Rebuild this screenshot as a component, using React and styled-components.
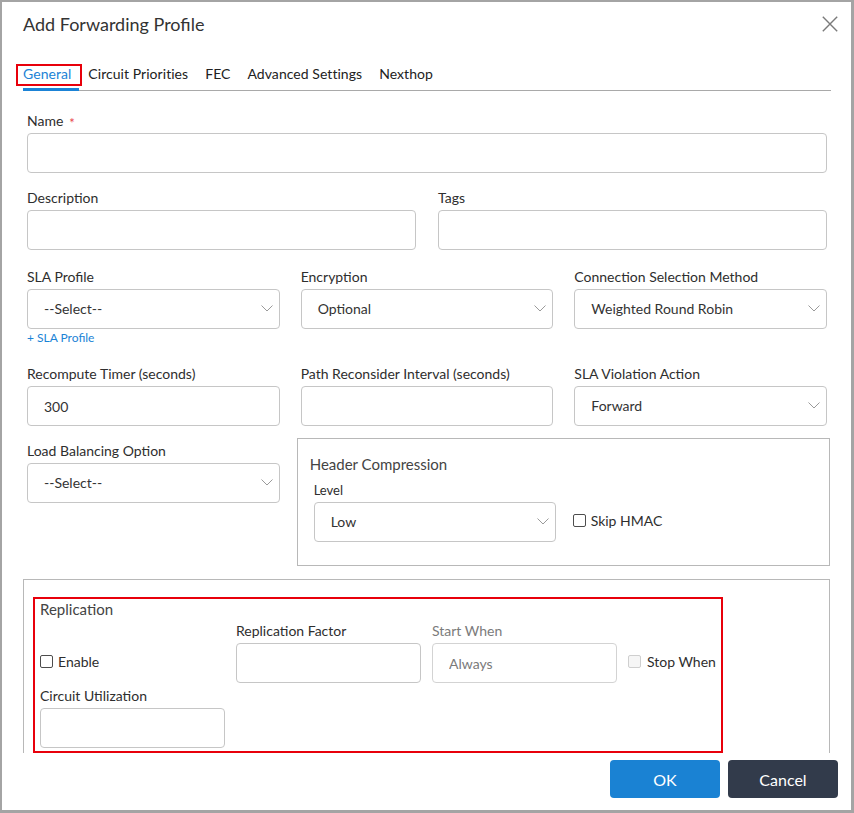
import React from "react";
import styled, { createGlobalStyle } from "styled-components";

const Global = createGlobalStyle`
  html, body { margin: 0; padding: 0; background: #fff; }
  body { font-family: Lato, "Open Sans", "Liberation Sans", Arial, sans-serif; color: #333; }
  *, *::before, *::after { box-sizing: border-box; }
`;

const Dialog = styled.div`
  width: 854px;
  height: 813px;
  border-style: solid;
  border-color: #a4a4a4;
  border-width: 2px 3px 3px 2px;
  display: flex;
  flex-direction: column;
  background: #fff;
`;

const Header = styled.div`
  height: 63px;
  display: flex;
  justify-content: space-between;
  align-items: flex-start;
  padding: 11px 13px 0 21px;
  flex-shrink: 0;
`;

const Title = styled.h1`
  margin: 0;
  font-size: 18px;
  line-height: 22px;
  font-weight: 400;
  color: #333;
`;

const CloseButton = styled.button`
  margin-top: 3px;
  width: 16px;
  height: 16px;
  padding: 0;
  border: 0;
  background: none;
  display: flex;
  cursor: pointer;
`;

const TabList = styled.div`
  display: flex;
  margin: 0 20px 0 21px;
  border-bottom: 1px solid #a9a9a9;
  flex-shrink: 0;
`;

const Tab = styled.div`
  position: relative;
  font-size: 14px;
  line-height: 17px;
  letter-spacing: 0.05px;
  padding: 0 8px 6px 0;
  margin-right: 9px;
  margin-bottom: -1px;
  border-bottom: 3px solid ${(p) => (p.$active ? "#1b83d6" : "transparent")};
  color: ${(p) => (p.$active ? "#1b83d6" : "#222")};
  white-space: nowrap;

  ${(p) =>
    p.$marked &&
    `
    &::after {
      content: "";
      position: absolute;
      left: -7px;
      top: -1px;
      width: 66px;
      height: 22px;
      border: 2px solid #e8000b;
    }
  `}
`;

const Body = styled.div`
  flex: 1;
  min-height: 0;
  overflow: hidden;
  padding: 21px 24px 0 25px;
`;

const Grid = styled.div`
  display: grid;
  grid-template-columns: repeat(${(p) => p.$cols}, minmax(0, 1fr));
  column-gap: ${(p) => p.$gap}px;
  margin-bottom: ${(p) => p.$mb}px;
  align-items: start;
`;

const Field = styled.div`
  display: flex;
  flex-direction: column;
  min-width: 0;
  width: ${(p) => (p.$w ? `${p.$w}px` : "auto")};
  flex-shrink: 0;
`;

const Label = styled.label`
  font-size: 14px;
  line-height: 17px;
  height: 17px;
  margin-bottom: 4px;
  color: ${(p) => (p.$muted ? "#7b7b7b" : "#2e2e2e")};
  white-space: nowrap;
`;

const SmallLabel = styled(Label)`
  font-size: 13px;
  line-height: 16px;
  height: 16px;
  margin-bottom: 4px;
`;

const Required = styled.span`
  display: inline-block;
  color: #e8474c;
  font-size: 13px;
  line-height: 13px;
  margin-left: 6px;
  transform: translateY(2px);
`;

const Input = styled.input`
  height: 40px;
  width: 100%;
  border: 1px solid ${(p) => (p.disabled ? "#d3d3d3" : "#c6c6c6")};
  border-radius: 4px;
  padding: 0 16px;
  font-family: inherit;
  font-size: 14px;
  color: #333;
  background: #fff;
  outline: none;
  &:disabled { color: #7a7a7a; }
`;

const SelectBox = styled.div`
  height: 40px;
  width: ${(p) => (p.$w ? `${p.$w}px` : "100%")};
  border: 1px solid #c6c6c6;
  border-radius: 4px;
  padding: 0 6px 1px 16px;
  display: flex;
  align-items: center;
  justify-content: space-between;
  font-size: 14px;
  color: #333;
  background: #fff;
  cursor: pointer;
`;

const Chevron = () => (
  <svg width="12" height="7" viewBox="0 0 12 7" fill="none">
    <path d="M0.5 0.5 L6 6 L11.5 0.5" stroke="#9a9a9a" strokeWidth="1" />
  </svg>
);

const Select = ({ value, w }) => (
  <SelectBox $w={w} role="combobox">
    <span>{value}</span>
    <Chevron />
  </SelectBox>
);

const AddLink = styled.a`
  margin-top: 1px;
  font-size: 12px;
  line-height: 15px;
  color: #1b83d6;
  text-decoration: none;
  cursor: pointer;
`;

const GroupBox = styled.div`
  border: 1px solid #b8b8b8;
  margin: -4px -3px 0 -4px;
  padding: 16px 12px 23px;
  grid-column: ${(p) => p.$span || "auto"};
`;

const GroupTitle = styled.div`
  font-size: 15px;
  line-height: 18px;
  color: #444;
  margin-bottom: ${(p) => p.$mb ?? 8}px;
`;

const InlineRow = styled.div`
  display: flex;
  align-items: flex-end;
  gap: ${(p) => p.$gap}px;
  padding-left: ${(p) => p.$pl || 0}px;
  margin-top: ${(p) => p.$mt || 0}px;
`;

const CheckRow = styled.label`
  height: 40px;
  padding-bottom: 4px;
  display: flex;
  align-items: center;
  gap: ${(p) => p.$gap || 5}px;
  font-size: 14px;
  color: #2e2e2e;
  white-space: nowrap;
  width: ${(p) => (p.$w ? `${p.$w}px` : "auto")};
  flex-shrink: 0;
`;

const Box = styled.span`
  width: 13px;
  height: 13px;
  border-radius: 2px;
  border: 1px solid ${(p) => (p.$disabled ? "#cfcfcf" : "#4d4d4d")};
  background: ${(p) => (p.$disabled ? "#f6f6f6" : "#fff")};
  flex-shrink: 0;
`;

const ReplicationBox = styled.div`
  border: 1px solid #b8b8b8;
  border-bottom: 0;
  margin: 13px -3px 0 -4px;
  padding: 17px 0 40px 9px;
`;

const Highlight = styled.div`
  width: 690px;
  border: 2px solid #e8000b;
  padding: 1px 0 3px 5px;
`;

const Footer = styled.div`
  flex-shrink: 0;
  display: flex;
  justify-content: flex-end;
  gap: 8px;
  padding: 7px 13px 12px;
`;

const Button = styled.button`
  width: 110px;
  height: 38px;
  border: 0;
  border-radius: 4px;
  font-family: inherit;
  font-size: 16px;
  color: #fff;
  background: ${(p) => (p.$primary ? "#1a82d3" : "#323b4b")};
  cursor: pointer;
`;

const tabs = ["General", "Circuit Priorities", "FEC", "Advanced Settings", "Nexthop"];

export default function App() {
  return (
    <>
      <Global />
      <Dialog>
        <Header>
          <Title>Add Forwarding Profile</Title>
          <CloseButton aria-label="Close">
            <svg width="16" height="16" viewBox="0 0 16 16">
              <path d="M0.8 0.8 L15.2 15.2 M15.2 0.8 L0.8 15.2" stroke="#7a7a7a" strokeWidth="1.4" />
            </svg>
          </CloseButton>
        </Header>

        <TabList>
          {tabs.map((t, i) => (
            <Tab key={t} $active={i === 0} $marked={i === 0}>
              {t}
            </Tab>
          ))}
        </TabList>

        <Body>
          <Grid $cols={1} $gap={0} $mb={16}>
            <Field>
              <Label>
                Name<Required>*</Required>
              </Label>
              <Input />
            </Field>
          </Grid>

          <Grid $cols={2} $gap={22} $mb={18}>
            <Field>
              <Label>Description</Label>
              <Input />
            </Field>
            <Field>
              <Label>Tags</Label>
              <Input />
            </Field>
          </Grid>

          <Grid $cols={3} $gap={21} $mb={20}>
            <Field>
              <Label>SLA Profile</Label>
              <Select value="--Select--" />
              <AddLink>+ SLA Profile</AddLink>
            </Field>
            <Field>
              <Label>Encryption</Label>
              <Select value="Optional" />
            </Field>
            <Field>
              <Label>Connection Selection Method</Label>
              <Select value="Weighted Round Robin" />
            </Field>
          </Grid>

          <Grid $cols={3} $gap={21} $mb={16}>
            <Field>
              <Label>Recompute Timer (seconds)</Label>
              <Input defaultValue="300" />
            </Field>
            <Field>
              <Label>Path Reconsider Interval (seconds)</Label>
              <Input />
            </Field>
            <Field>
              <Label>SLA Violation Action</Label>
              <Select value="Forward" />
            </Field>
          </Grid>

          <Grid $cols={3} $gap={21} $mb={0}>
            <Field>
              <Label>Load Balancing Option</Label>
              <Select value="--Select--" />
            </Field>
            <GroupBox $span="2 / 4">
              <GroupTitle $mb={9}>Header Compression</GroupTitle>
              <InlineRow $gap={17} $pl={4}>
                <Field $w={242}>
                  <SmallLabel>Level</SmallLabel>
                  <Select value="Low" />
                </Field>
                <CheckRow>
                  <Box />
                  Skip HMAC
                </CheckRow>
              </InlineRow>
            </GroupBox>
          </Grid>

          <ReplicationBox>
            <Highlight>
              <GroupTitle $mb={4}>Replication</GroupTitle>
              <InlineRow $gap={11}>
                <CheckRow $w={185}>
                  <Box />
                  Enable
                </CheckRow>
                <Field $w={185}>
                  <Label>Replication Factor</Label>
                  <Input />
                </Field>
                <Field $w={185}>
                  <Label $muted>Start When</Label>
                  <Input disabled defaultValue="Always" />
                </Field>
                <CheckRow $gap={6}>
                  <Box $disabled />
                  Stop When
                </CheckRow>
              </InlineRow>
              <InlineRow $gap={11} $mt={4}>
                <Field $w={185}>
                  <Label>Circuit Utilization</Label>
                  <Input />
                </Field>
              </InlineRow>
            </Highlight>
          </ReplicationBox>
        </Body>

        <Footer>
          <Button $primary>OK</Button>
          <Button>Cancel</Button>
        </Footer>
      </Dialog>
    </>
  );
}
